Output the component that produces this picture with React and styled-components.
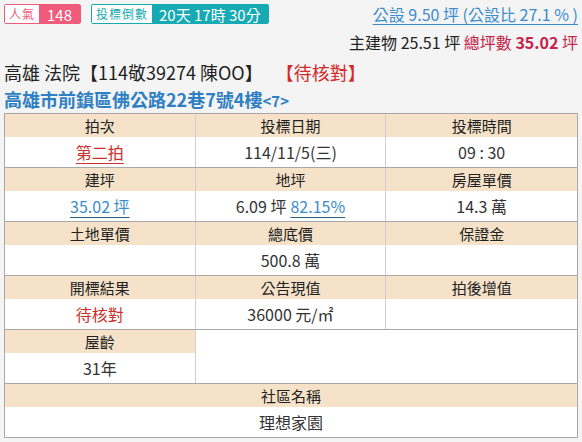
import React from "react";
import styled, { createGlobalStyle } from "styled-components";

const GlobalStyle = createGlobalStyle`
  html, body {
    margin: 0;
    padding: 0;
    background: #f4f4f4;
  }
  body {
    font-family: "Noto Sans CJK TC", "Noto Sans", sans-serif;
    color: #333;
  }
`;

const Page = styled.div`
  width: 582px;
  height: 442px;
  padding: 0 4px;
  box-sizing: border-box;
  overflow: hidden;
`;

const TopRow = styled.div`
  display: flex;
  justify-content: space-between;
  align-items: flex-start;
  padding-top: 4px;
  height: 26px;
`;

const Badges = styled.div`
  display: flex;
  gap: 10px;
`;

const Badge = styled.div`
  display: flex;
  height: 20px;
  box-sizing: border-box;
  border: 1px solid ${(p) => p.color};
  border-radius: 2px;
`;

const BadgeLabel = styled.span`
  display: flex;
  align-items: center;
  padding: 0 4px;
  background: #fff;
  color: ${(p) => p.color};
  font-size: 12px;
  line-height: 1;
  letter-spacing: 1px;
`;

const BadgeValue = styled.span`
  display: flex;
  align-items: center;
  padding: 0 ${(p) => p.pad}px;
  background: ${(p) => p.color};
  color: #fff;
  font-size: ${(p) => p.size}px;
  line-height: 1;
  white-space: nowrap;
`;

const PublicLink = styled.a`
  color: #3b8ccc;
  font-size: 16px;
  line-height: 20px;
  text-decoration: underline;
  text-underline-offset: 3px;
  cursor: pointer;
`;

const AreaRow = styled.div`
  text-align: right;
  font-size: 16px;
  line-height: 24px;
  color: #222;
`;

const Crimson = styled.span`
  color: #c4234a;
  font-weight: ${(p) => (p.bold ? 700 : 400)};
`;

const Title = styled.div`
  margin-top: 6px;
  font-size: 18px;
  line-height: 24px;
  color: #222;
  white-space: nowrap;
`;

const Status = styled.span`
  color: #d42a2a;
  margin-left: 22px;
`;

const Address = styled.div`
  padding-top: 3px;
  font-size: 18px;
  line-height: 24px;
  font-weight: 700;
  color: #2f7fc4;
`;

const Floor = styled.span`
  font-size: 15px;
`;

const Table = styled.div`
  border: 1px solid #a8a8a8;
  background: #fff;
`;

const Block = styled.div`
  display: grid;
  grid-template-columns: repeat(3, 1fr);
  border-bottom: ${(p) => (p.last ? "none" : "1px solid #a8a8a8")};
`;

const Column = styled.div`
  grid-column: span ${(p) => p.span || 1};
  display: grid;
  grid-template-rows: 23px 30px;
  border-right: ${(p) => (p.end ? "none" : "1px solid #cfcfcf")};
`;

const Head = styled.div`
  background: ${(p) => (p.empty ? "#fff" : "#f5e2c9")};
  display: flex;
  align-items: center;
  justify-content: center;
  font-size: 15px;
  color: #222;
`;

const Value = styled.div`
  display: flex;
  align-items: center;
  justify-content: center;
  font-size: 16px;
  color: ${(p) => (p.tone === "red" ? "#c9302c" : "#333")};
`;

const Underlined = styled.span`
  color: ${(p) => (p.tone === "red" ? "#c9302c" : "#3b8ccc")};
  text-decoration: underline;
  text-decoration-color: ${(p) => (p.tone === "red" ? "#c9302c" : "#2d5f80")};
  text-underline-offset: 4px;
  margin-left: ${(p) => (p.gap ? "4px" : "0")};
`;

const rows = [
  [
    { head: "拍次", value: <Underlined tone="red">第二拍</Underlined> },
    { head: "投標日期", value: "114/11/5(三)" },
    { head: "投標時間", value: "09 : 30" },
  ],
  [
    { head: "建坪", value: <Underlined>35.02 坪</Underlined> },
    {
      head: "地坪",
      value: (
        <>
          6.09 坪<Underlined gap>82.15%</Underlined>
        </>
      ),
    },
    { head: "房屋單價", value: "14.3 萬" },
  ],
  [
    { head: "土地單價", value: "" },
    { head: "總底價", value: "500.8 萬" },
    { head: "保證金", value: "" },
  ],
  [
    { head: "開標結果", value: "待核對", tone: "red" },
    { head: "公告現值", value: "36000 元/㎡" },
    { head: "拍後增值", value: "" },
  ],
  [
    { head: "屋齡", value: "31年" },
    { head: "", value: "", span: 2, empty: true },
  ],
  [{ head: "社區名稱", value: "理想家園", span: 3 }],
];

export default function App() {
  return (
    <Page>
      <GlobalStyle />
      <TopRow>
        <Badges>
          <Badge color="#f15b7b">
            <BadgeLabel color="#f15b7b">人氣</BadgeLabel>
            <BadgeValue color="#f15b7b" pad={8} size={15}>
              148
            </BadgeValue>
          </Badge>
          <Badge color="#17aab3">
            <BadgeLabel color="#17aab3">投標倒數</BadgeLabel>
            <BadgeValue color="#17aab3" pad={7} size={15}>
              20天 17時 30分
            </BadgeValue>
          </Badge>
        </Badges>
        <PublicLink>公設 9.50 坪 (公設比 27.1 % )</PublicLink>
      </TopRow>
      <AreaRow>
        主建物 25.51 坪 <Crimson>總坪數</Crimson> <Crimson bold>35.02</Crimson>{" "}
        <Crimson>坪</Crimson>
      </AreaRow>
      <Title>
        高雄 法院【114敬39274 陳OO】<Status>【待核對】</Status>
      </Title>
      <Address>
        高雄市前鎮區佛公路22巷7號4樓<Floor>&lt;7&gt;</Floor>
      </Address>
      <Table>
        {rows.map((cells, i) => {
          let used = 0;
          return (
            <Block key={i} last={i === rows.length - 1}>
              {cells.map((c, j) => {
                used += c.span || 1;
                return (
                  <Column key={j} span={c.span} end={used === 3}>
                    <Head empty={c.empty}>{c.head}</Head>
                    <Value tone={c.tone}>{c.value}</Value>
                  </Column>
                );
              })}
            </Block>
          );
        })}
      </Table>
    </Page>
  );
}
